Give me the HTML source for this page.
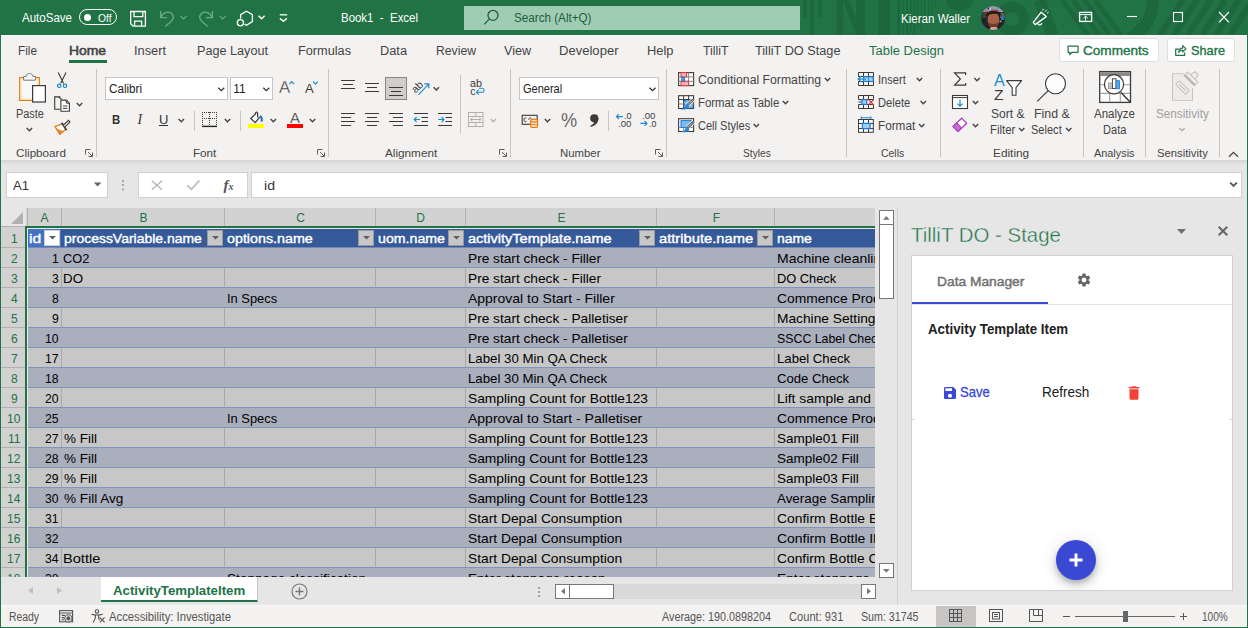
<!DOCTYPE html>
<html lang="en"><head><meta charset="utf-8"><title>Book1 - Excel</title>
<style>

html,body{margin:0;padding:0}
body{width:1248px;height:628px;position:relative;overflow:hidden;background:#e6e6e6;font-family:"Liberation Sans",sans-serif;color:#333}
div,span,svg{position:absolute;box-sizing:border-box}
svg{overflow:visible}
.t{white-space:pre;transform-origin:0 0;line-height:normal}

</style></head>
<body>
<div style="left:0px;top:0px;width:1248px;height:35px;background:#217346;"></div>
<svg style="left:0px;top:0px;overflow:hidden;" width="1248" height="35" viewBox="0 0 1248 35"><g fill="#1c673e" stroke="none"><rect x="803" y="0" width="4" height="18"/><rect x="810" y="0" width="4" height="35"/><rect x="817.7" y="0" width="4.3" height="17"/><rect x="836.7" y="0" width="6.3" height="35"/><path d="M843 0L856 35V0Z" opacity="0"/><path d="M843 0H849L862 35H856Z"/><rect x="856" y="0" width="9" height="35"/><rect x="878.4" y="0" width="11.6" height="35"/><rect x="897.5" y="0" width="2.5" height="35"/><rect x="902.5" y="0" width="1.5" height="33"/><rect x="906.3" y="0" width="1.7" height="35"/><rect x="910" y="0" width="1.6" height="31"/><rect x="913.6" y="0" width="1.6" height="35"/><rect x="917.2" y="0" width="1.4" height="28"/><rect x="920.8" y="0" width="1.4" height="30"/><rect x="924.4" y="0" width="1.2" height="24"/><rect x="928" y="0" width="1.2" height="20"/><rect x="931.6" y="0" width="1" height="14"/><rect x="935.2" y="0" width="1" height="8"/><path d="M946 0A13.5 11 0 0 0 973 0Z"/></g><g fill="none" stroke="#1c673e"><circle cx="1012" cy="19" r="12" stroke-width="10"/><path d="M1040 0L1052 35" stroke-width="12"/><path d="M1062 0L1088 35M1073 0L1099 35M1084 0L1110 35M1095 0L1121 35" stroke-width="5"/><path d="M1153 -4C1154 16 1146 28 1130 38" stroke-width="12"/><path d="M1183 0L1160 35M1197 0L1174 35M1211 0L1188 35M1225 0L1202 35M1239 0L1216 35M1253 0L1230 35" stroke-width="6"/></g></svg>
<div style="left:464px;top:6px;width:336px;height:24px;background:#9fcdb3;"></div>
<span class="t" style="left:22px;top:11px;font-size:12px;color:#fff;transform:scaleX(0.9607);">AutoSave</span>
<div style="left:79px;top:9px;width:38px;height:16px;border:1px solid #fff;border-radius:8px;"></div>
<div style="left:83.5px;top:13.5px;width:7px;height:7px;background:#fff;border-radius:50%;"></div>
<span class="t" style="left:97.5px;top:11.5px;font-size:11px;color:#fff;transform:scaleX(0.9320);">Off</span>
<span class="t" style="left:341px;top:11px;font-size:12px;color:#fff;transform:scaleX(0.9541);">Book1  -  Excel</span>
<span class="t" style="left:514px;top:11px;font-size:12px;color:#1e5c3c;transform:scaleX(0.9724);">Search (Alt+Q)</span>
<span class="t" style="left:901px;top:11.5px;font-size:12px;color:#fff;transform:scaleX(0.9640);">Kieran Waller</span>
<svg style="left:0px;top:0px;" width="1248" height="35" viewBox="0 0 1248 35"><g fill="none" stroke="#fff" stroke-width="1.3"><path d="M130.7 11.5H145.4V26.2H133.2L130.7 23.7Z"/><path d="M134 11.5V16.6H142.8V11.5"/><path d="M134.6 26.2V21.2H141.6V26.2"/></g><g fill="none" stroke="#6ca886" stroke-width="1.3"><path d="M160.6 11V17.6H167.2"/><path d="M161 17.2C163 12 169 10.6 172 14C174.6 17 173 19.5 171 21.5L165.2 26.6"/></g><g fill="none" stroke="#6ca886" stroke-width="1.3"><path d="M212.4 11V17.6H205.8"/><path d="M212 17.2C210 12 204 10.6 201 14C198.4 17 200 19.5 202 21.5L207.8 26.6"/></g><path d="M180.5 15.8L183.5 18.8L186.5 15.8" fill="none" stroke="#6ca886" stroke-width="1.2"/><path d="M219.7 15.8L222.7 18.8L225.7 15.8" fill="none" stroke="#6ca886" stroke-width="1.2"/><g fill="none" stroke="#fff" stroke-width="1.3"><path d="M240.6 18.5V14.6L246.5 11.2L252.4 14.6V21.6L246.5 25.2L244.6 24.2"/><circle cx="240.4" cy="22.7" r="3.1"/></g><path d="M258.6 15.8L261.6 18.8L264.6 15.8" fill="none" stroke="#fff" stroke-width="1.5"/><path d="M279.7 14.8H287.2" stroke="#fff" stroke-width="1.3"/><path d="M279.9 18.4L283.4 21.4L286.9 18.4" fill="none" stroke="#fff" stroke-width="1.4"/><g fill="none" stroke="#1e5c3c" stroke-width="1.3"><circle cx="493" cy="15.3" r="5"/><path d="M489.4 18.9L484.3 24.4"/></g><defs><clipPath id="av"><circle cx="993.1" cy="18" r="12"/></clipPath></defs><g clip-path="url(#av)"><rect x="981" y="6" width="25" height="25" fill="#23222b"/><rect x="981" y="6" width="25" height="6" fill="#8d98b2"/><rect x="981" y="12" width="6" height="6" fill="#3c4036"/><rect x="1000" y="13" width="6" height="5" fill="#55605a"/><ellipse cx="993.4" cy="20" rx="5.8" ry="8" fill="#a5634a"/><path d="M986 16.5C985 9 1001 8 1001.5 16C999 12.8 989.5 13.2 986 16.5Z" fill="#2b1b15"/><path d="M988.2 22C989 29.5 997.6 29.5 998.6 22C997 24.6 990 24.6 988.2 22Z" fill="#74382a"/><path d="M989 30L991 27H996.5L999 30.5Z" fill="#c9a590"/><circle cx="986.6" cy="11.6" r="1.1" fill="#d8442f"/><circle cx="992.4" cy="10.2" r="1.1" fill="#d8442f"/><circle cx="996.6" cy="10.4" r="1" fill="#c43c2c"/><circle cx="1001.4" cy="11.6" r="1" fill="#e07f86"/><circle cx="988.4" cy="8.4" r="0.8" fill="#111"/><circle cx="990" cy="8.8" r="0.7" fill="#eee"/><rect x="1001" y="17" width="3.4" height="3" fill="#2a6fd6"/><rect x="999.6" y="20.6" width="2" height="1.6" fill="#d8a32a"/></g><g fill="none" stroke="#fff" stroke-width="1.3" stroke-linejoin="round"><path d="M1033.2 22.3L1041.2 12.2L1046.2 16.6L1035.2 24.6Z"/><path d="M1038 23.6C1038.6 25.6 1041.6 25.4 1041.8 23"/><path d="M1045.2 11.6L1046.6 9.8M1047 13.2L1048.6 12.2M1042.8 10.4L1043.2 8.8" stroke-width="1"/></g><g fill="none" stroke="#fff" stroke-width="1.3"><rect x="1079.6" y="12.4" width="12" height="9"/><path d="M1079.6 14.6H1091.6" stroke-width="1"/><path d="M1085.6 20.5V16.2M1083.4 18.2L1085.6 16L1087.8 18.2" stroke-width="1"/></g><path d="M1127 16.5H1137" stroke="#fff" stroke-width="1.1"/><rect x="1173.5" y="12.5" width="9" height="9" fill="none" stroke="#fff" stroke-width="1.1"/><path d="M1219 12L1229 22.4M1229 12L1219 22.4" stroke="#fff" stroke-width="1.1"/></svg>
<div style="left:1px;top:35px;width:1246px;height:125px;background:#f3f2f1;"></div>
<div style="left:1px;top:35px;width:1246px;height:1px;background:#fbfafa;"></div>
<div style="left:1px;top:35px;width:1px;height:125px;background:#fbfafa;"></div>
<div style="left:1px;top:160px;width:1246px;height:6px;background:linear-gradient(#d3d3d3,#dedede 40%,#e6e6e6);"></div>
<span class="t" style="left:18px;top:44px;font-size:12.5px;color:#444;transform:scaleX(0.9426);">File</span>
<span class="t" style="left:69px;top:44px;font-size:12.5px;color:#444;transform:scaleX(1.1097);-webkit-text-stroke:0.55px #444;">Home</span>
<span class="t" style="left:134px;top:44px;font-size:12.5px;color:#444;transform:scaleX(1.0235);">Insert</span>
<span class="t" style="left:197px;top:44px;font-size:12.5px;color:#444;transform:scaleX(1.0114);">Page Layout</span>
<span class="t" style="left:298px;top:44px;font-size:12.5px;color:#444;transform:scaleX(1.0174);">Formulas</span>
<span class="t" style="left:380px;top:44px;font-size:12.5px;color:#444;transform:scaleX(1.0225);">Data</span>
<span class="t" style="left:436px;top:44px;font-size:12.5px;color:#444;transform:scaleX(0.9756);">Review</span>
<span class="t" style="left:504px;top:44px;font-size:12.5px;color:#444;transform:scaleX(1.0047);">View</span>
<span class="t" style="left:559px;top:44px;font-size:12.5px;color:#444;transform:scaleX(1.0441);">Developer</span>
<span class="t" style="left:647px;top:44px;font-size:12.5px;color:#444;transform:scaleX(1.0304);">Help</span>
<span class="t" style="left:702.5px;top:44px;font-size:12.5px;color:#444;transform:scaleX(0.9837);">TilliT</span>
<span class="t" style="left:755px;top:44px;font-size:12.5px;color:#444;transform:scaleX(1.0171);">TilliT DO Stage</span>
<span class="t" style="left:869px;top:44px;font-size:12.5px;color:#217346;transform:scaleX(1.0378);">Table Design</span>
<div style="left:69px;top:60px;width:38px;height:3px;background:#217346;"></div>
<div style="left:1059px;top:38px;width:100px;height:24px;background:#fff;border:1px solid #e1dfdd;border-radius:3px;"></div>
<div style="left:1167px;top:38px;width:68px;height:24px;background:#fff;border:1px solid #e1dfdd;border-radius:3px;"></div>
<span class="t" style="left:1083.3px;top:43px;font-size:13px;color:#217346;transform:scaleX(1.0436);-webkit-text-stroke:0.35px #217346;">Comments</span>
<span class="t" style="left:1191.2px;top:43px;font-size:13px;color:#217346;transform:scaleX(0.9797);-webkit-text-stroke:0.35px #217346;">Share</span>
<svg style="left:0px;top:36px;" width="1248" height="30" viewBox="0 36 1248 30"><g fill="none" stroke="#217346" stroke-width="1.2" stroke-linejoin="round"><path d="M1068.1 46.1H1078.1V52.3H1072.2L1069.8 54.5V52.3H1068.1Z"/><path d="M1179.2 49.2H1175.7V55.3H1184.7V52.4"/><path d="M1178.8 52.6C1179 49.6 1180.6 48.2 1182.6 48.2V45.6L1186 48.9L1182.6 51.8V50C1181 50 1179.8 50.6 1178.8 52.6Z"/></g></svg>
<div style="left:96px;top:69px;width:1px;height:88px;background:#c8c6c4;"></div>
<div style="left:328px;top:69px;width:1px;height:88px;background:#c8c6c4;"></div>
<div style="left:510px;top:69px;width:1px;height:88px;background:#c8c6c4;"></div>
<div style="left:666px;top:69px;width:1px;height:88px;background:#c8c6c4;"></div>
<div style="left:846px;top:69px;width:1px;height:88px;background:#c8c6c4;"></div>
<div style="left:940px;top:69px;width:1px;height:88px;background:#c8c6c4;"></div>
<div style="left:1083px;top:69px;width:1px;height:88px;background:#c8c6c4;"></div>
<div style="left:1145px;top:69px;width:1px;height:88px;background:#c8c6c4;"></div>
<div style="left:1219px;top:69px;width:1px;height:88px;background:#c8c6c4;"></div>
<div style="left:194px;top:111px;width:1px;height:20px;background:#c8c6c4;"></div>
<div style="left:240px;top:111px;width:1px;height:20px;background:#c8c6c4;"></div>
<div style="left:608px;top:111px;width:1px;height:20px;background:#c8c6c4;"></div>
<div style="left:460px;top:75px;width:1px;height:59px;background:#c8c6c4;"></div>
<div style="left:105px;top:77px;width:123px;height:23px;background:#fff;border:1px solid #c8c6c4;"></div>
<div style="left:230px;top:77px;width:43px;height:23px;background:#fff;border:1px solid #c8c6c4;"></div>
<div style="left:519px;top:77px;width:140px;height:23px;background:#fff;border:1px solid #c8c6c4;"></div>
<div style="left:385px;top:77px;width:22px;height:23px;background:#d0cecc;border:1px solid #8a8886;"></div>
<span class="t" style="left:16.3px;top:106.9px;font-size:12px;color:#444;transform:scaleX(0.9092);">Paste</span>
<span class="t" style="left:108.7px;top:82px;font-size:12px;color:#222;transform:scaleX(0.9701);">Calibri</span>
<span class="t" style="left:233.2px;top:82px;font-size:12px;color:#222;">11</span>
<span class="t" style="left:522.5px;top:82px;font-size:12px;color:#222;transform:scaleX(0.9180);">General</span>
<span class="t" style="left:15.5px;top:145.9px;font-size:11.6px;color:#444;transform:scaleX(1.0076);">Clipboard</span>
<span class="t" style="left:192.5px;top:145.9px;font-size:11.6px;color:#444;transform:scaleX(1.0042);">Font</span>
<span class="t" style="left:385.3px;top:145.9px;font-size:11.6px;color:#444;transform:scaleX(1.0124);">Alignment</span>
<span class="t" style="left:560.3px;top:145.9px;font-size:11.6px;color:#444;transform:scaleX(0.9818);">Number</span>
<span class="t" style="left:742.5px;top:145.9px;font-size:11.6px;color:#444;transform:scaleX(0.8804);">Styles</span>
<span class="t" style="left:881.3px;top:145.9px;font-size:11.6px;color:#444;transform:scaleX(0.8999);">Cells</span>
<span class="t" style="left:993.3px;top:145.9px;font-size:11.6px;color:#444;transform:scaleX(1.0211);">Editing</span>
<span class="t" style="left:1094px;top:145.9px;font-size:11.6px;color:#444;transform:scaleX(0.9381);">Analysis</span>
<span class="t" style="left:1157px;top:145.9px;font-size:11.6px;color:#444;transform:scaleX(0.9731);">Sensitivity</span>
<span class="t" style="left:697.5px;top:73px;font-size:12px;color:#444;transform:scaleX(1.0188);">Conditional Formatting</span>
<span class="t" style="left:697.5px;top:95.6px;font-size:12px;color:#444;transform:scaleX(0.9461);">Format as Table</span>
<span class="t" style="left:697.5px;top:118.8px;font-size:12px;color:#444;transform:scaleX(0.9208);">Cell Styles</span>
<span class="t" style="left:877.5px;top:73px;font-size:12px;color:#444;transform:scaleX(0.9262);">Insert</span>
<span class="t" style="left:877.5px;top:95.6px;font-size:12px;color:#444;transform:scaleX(0.9283);">Delete</span>
<span class="t" style="left:877.5px;top:118.8px;font-size:12px;color:#444;transform:scaleX(0.9785);">Format</span>
<span class="t" style="left:991px;top:106.7px;font-size:12px;color:#444;transform:scaleX(1.0102);">Sort &amp;</span>
<span class="t" style="left:989.7px;top:122.7px;font-size:12px;color:#444;transform:scaleX(0.9486);">Filter</span>
<span class="t" style="left:1034px;top:106.7px;font-size:12px;color:#444;transform:scaleX(1.0292);">Find &amp;</span>
<span class="t" style="left:1031px;top:122.7px;font-size:12px;color:#444;transform:scaleX(0.9203);">Select</span>
<span class="t" style="left:1094px;top:106.7px;font-size:12px;color:#444;transform:scaleX(0.9601);">Analyze</span>
<span class="t" style="left:1103.3px;top:122.7px;font-size:12px;color:#444;transform:scaleX(0.9227);">Data</span>
<span class="t" style="left:1156px;top:106.7px;font-size:12px;color:#a19f9d;transform:scaleX(0.9772);">Sensitivity</span>
<span class="t" style="left:112.2px;top:111.5px;font-size:13px;font-weight:700;transform:scaleX(0.8732);">B</span>
<span class="t" style="left:137.5px;top:111.5px;font-size:14px;font-family:'Liberation Serif',serif;font-style:italic;">I</span>
<span class="t" style="left:159px;top:111.5px;font-size:13px;">U</span>
<div style="left:159px;top:125px;width:9px;height:1px;background:#333;"></div>
<span class="t" style="left:561px;top:109.2px;font-size:19.4px;color:#3b3a39;transform:scaleX(0.9391);-webkit-text-stroke:0.25px #f3f2f1;">%</span>
<svg style="left:0px;top:0px;" width="1248" height="165" viewBox="0 0 1248 165"><rect x="19.7" y="77.6" width="19.6" height="22.8" fill="#f9f9f9" stroke="#e07a0f" stroke-width="1.2"/><rect x="20.9" y="78.8" width="17.2" height="20.4" fill="none" stroke="#fbdba6" stroke-width="1.1"/><path d="M23.6 80.2V76.4H26.2C26.4 72.6 32.6 72.6 32.8 76.4H35.4V80.2Z" fill="#f8f8f8" stroke="#797775" stroke-width="1"/><rect x="32.6" y="85.6" width="12.8" height="16.4" fill="#fff" stroke="#3b3a39" stroke-width="1.2"/><path d="M26.7 127.9L29.4 130.70000000000002L32.1 127.9" fill="none" stroke="#444" stroke-width="1.4"/><path d="M58.2 72.6L63.6 83.6M66 72.6L60.6 83.6" stroke="#3b3a39" stroke-width="1.1" fill="none"/><circle cx="59.2" cy="85.8" r="1.7" fill="none" stroke="#1e8bcd" stroke-width="1.2"/><circle cx="65" cy="85.8" r="1.7" fill="none" stroke="#1e8bcd" stroke-width="1.2"/><path d="M60.4 96.9H54.7V109.3H60" fill="none" stroke="#3b3a39" stroke-width="1.1"/><path d="M58.4 96.9L61.6 99.2" fill="none" stroke="#3b3a39" stroke-width="1.1"/><path d="M60.9 100.1H66.3L69.4 103.2V111.3H60.9Z" fill="#fff" stroke="#3b3a39" stroke-width="1.1"/><path d="M66.3 100.1V103.2H69.4" fill="none" stroke="#3b3a39" stroke-width="1"/><path d="M63 106H67.4M63 108.4H67.4" stroke="#3b3a39" stroke-width="1"/><path d="M76.8 102.89999999999999L79.5 105.7L82.2 102.89999999999999" fill="none" stroke="#444" stroke-width="1.4"/><path d="M55 126.6L62.6 123.6L65.8 129.2L59.8 134.4Z" fill="#fff" stroke="#e07a0f" stroke-width="1.2" stroke-linejoin="round"/><path d="M57 128.6L63.6 131.2L59.8 134.4Z" fill="#e07a0f" opacity=".85"/><path d="M61.6 122.8L66.6 130.2" stroke="#3b3a39" stroke-width="1.6"/><path d="M63.6 125L68.6 120.4L70 122L65 126.8" fill="#fff" stroke="#3b3a39" stroke-width="1.1"/><g fill="none" stroke="#605e5c" stroke-width="1"><path d="M85.5 154.5V149.5H90.5"/><path d="M88 152L92.2 156.2M92.5 152.5V156.5H88.5"/></g><path d="M218.3 87.7L221.3 90.7L224.3 87.7" fill="none" stroke="#333" stroke-width="1.3"/><path d="M263.3 87.7L266.3 90.7L269.3 87.7" fill="none" stroke="#333" stroke-width="1.3"/><path d="M289.4 84.2L291.7 81.6L294 84.2" fill="none" stroke="#1e8bcd" stroke-width="1.2"/><path d="M313.2 81.6L315.5 84.2L317.8 81.6" fill="none" stroke="#1e8bcd" stroke-width="1.2"/><path d="M178.60000000000002 118.89999999999999L181.3 121.7L184.0 118.89999999999999" fill="none" stroke="#444" stroke-width="1.4"/><path d="M202 112.5H217M202 118.5H217M202.5 112V125M209.5 112V125M216.5 112V125" stroke="#3b3a39" stroke-width="1" stroke-dasharray="1 1" fill="none"/><path d="M202 126.4H217" stroke="#222" stroke-width="1.4"/><path d="M224.8 118.89999999999999L227.5 121.7L230.2 118.89999999999999" fill="none" stroke="#444" stroke-width="1.4"/><path d="M255.5 113.9L250.8 118.5L255.2 122.6L259.7 117.2" fill="#fafafa" stroke="#3b3a39" stroke-width="1.2" stroke-linejoin="round"/><path d="M255.5 114.6V113.4C255.6 111.6 257.5 111.6 257.6 113.4V117.4" fill="none" stroke="#3b3a39" stroke-width="1.2"/><path d="M259.8 116.2C261.6 116.6 262.2 119 261.6 121.6" fill="none" stroke="#1668c2" stroke-width="2"/><rect x="248" y="124" width="16" height="4" fill="#ffff00"/><path d="M270.6 118.89999999999999L273.3 121.7L276.0 118.89999999999999" fill="none" stroke="#444" stroke-width="1.4"/><rect x="287" y="124" width="16" height="4" fill="#ff0000"/><path d="M309.8 118.89999999999999L312.5 121.7L315.2 118.89999999999999" fill="none" stroke="#444" stroke-width="1.4"/><g fill="none" stroke="#605e5c" stroke-width="1"><path d="M317.5 154.5V149.5H322.5"/><path d="M320 152L324.2 156.2M324.5 152.5V156.5H320.5"/></g><path d="M341 80.5H355M343 84.5H353M341 88.5H355" stroke="#3b3a39" stroke-width="1.1" fill="none"/><path d="M365 83.5H379M367 87.5H377M365 91.5H379" stroke="#3b3a39" stroke-width="1.1" fill="none"/><path d="M389 87.5H403M391 91.5H401M389 95.5H403" stroke="#3b3a39" stroke-width="1.1" fill="none"/><path d="M341 113.5H355M341 117.5H351M341 121.5H355M341 125.5H351" stroke="#3b3a39" stroke-width="1.1" fill="none"/><path d="M365 113.5H379M367 117.5H377M365 121.5H379M367 125.5H377" stroke="#3b3a39" stroke-width="1.1" fill="none"/><path d="M389 113.5H403M393 117.5H403M389 121.5H403M393 125.5H403" stroke="#3b3a39" stroke-width="1.1" fill="none"/><path d="M414 113.5H428M414 125.5H428" stroke="#3b3a39" stroke-width="1.1" fill="none"/><path d="M421.5 117.5H428M421.5 121.5H428" stroke="#3b3a39" stroke-width="1.1" fill="none"/><path d="M414.2 119.5H420M416.6 117L414.2 119.5L416.6 122" fill="none" stroke="#1e8bcd" stroke-width="1.1"/><path d="M438 113.5H452M438 125.5H452" stroke="#3b3a39" stroke-width="1.1" fill="none"/><path d="M445.5 117.5H452M445.5 121.5H452" stroke="#3b3a39" stroke-width="1.1" fill="none"/><path d="M438.2 119.5H444M441.6 117L444 119.5L441.6 122" fill="none" stroke="#1e8bcd" stroke-width="1.1"/><path d="M418.6 94.6L428.6 84.2M424.4 83.8H428.8V88.2" fill="none" stroke="#1e8bcd" stroke-width="1.2"/><path d="M433.6 87.3L436.3 90.10000000000001L439.0 87.3" fill="none" stroke="#444" stroke-width="1.4"/><path d="M479 88.2H482.4C484.6 88.2 484.6 92.2 482.4 92.2H476.6M478.8 89.8L476.4 92.2L478.8 94.6" fill="none" stroke="#1e8bcd" stroke-width="1.1"/><g fill="none" stroke="#b3b0ad" stroke-width="1"><rect x="468.5" y="112.5" width="14.5" height="14"/><path d="M468.5 116.5H483M468.5 122.5H483M475.7 112.5V116.5M475.7 122.5V126.5"/><path d="M470.6 119.5H481M472.4 117.8L470.6 119.5L472.4 121.2M479.2 117.8L481 119.5L479.2 121.2"/></g><path d="M490.6 118.89999999999999L493.3 121.7L496.0 118.89999999999999" fill="none" stroke="#b3b0ad" stroke-width="1.4"/><g fill="none" stroke="#605e5c" stroke-width="1"><path d="M499.5 154.5V149.5H504.5"/><path d="M502 152L506.2 156.2M506.5 152.5V156.5H502.5"/></g><path d="M649.5 87.7L652.5 90.7L655.5 87.7" fill="none" stroke="#333" stroke-width="1.3"/><rect x="522.2" y="115.3" width="15" height="9" fill="none" stroke="#3b3a39" stroke-width="1.1"/><path d="M526.5 118.2C525.2 117.2 523.9 118.2 523.9 119.8C523.9 121.4 525.2 122.4 526.5 121.4M531.4 118.2C530.1 117.2 528.8 118.2 528.8 119.8" fill="none" stroke="#3b3a39" stroke-width="1"/><path d="M530.6 120.6V126.2C530.6 128 537.6 128 537.6 126.2V120.6" fill="#fbe3c3" stroke="#e07a0f" stroke-width="1.1"/><ellipse cx="534.1" cy="120.6" rx="3.5" ry="1.5" fill="#fbe3c3" stroke="#e07a0f" stroke-width="1.1"/><path d="M530.6 123.4C530.6 125.2 537.6 125.2 537.6 123.4" fill="none" stroke="#e07a0f" stroke-width="1"/><path d="M544.8 118.89999999999999L547.5 121.7L550.2 118.89999999999999" fill="none" stroke="#444" stroke-width="1.4"/><circle cx="594.3" cy="118.3" r="4.1" fill="#3b3a39"/><path d="M598.4 118.2C598.6 123 595 126 590.6 126.8L590.2 125.8C593.2 124.8 594.8 122.6 594.6 120.6Z" fill="#3b3a39"/><path d="M616.4 116.6H623M618.8 114.2L616.4 116.6L618.8 119" fill="none" stroke="#1e8bcd" stroke-width="1.1"/><path d="M640.4 123.4H647M644.6 121L647 123.4L644.6 125.8" fill="none" stroke="#1e8bcd" stroke-width="1.1"/><g fill="none" stroke="#605e5c" stroke-width="1"><path d="M655.5 154.5V149.5H660.5"/><path d="M658 152L662.2 156.2M662.5 152.5V156.5H658.5"/></g><rect x="678.6" y="72.6" width="15" height="13" fill="#fff" stroke="#3b3a39" stroke-width="1.1"/><path d="M678.6 76.9H693.6M678.6 81.3H693.6M683.6 72.6V85.6M688.6 72.6V85.6" stroke="#8a8886" stroke-width="1" fill="none"/><rect x="681" y="72.6" width="5.6" height="4.3" fill="#f9b4b7" stroke="#e03a3e" stroke-width="1"/><rect x="681" y="81.3" width="7.6" height="4.3" fill="#f9b4b7" stroke="#e03a3e" stroke-width="1"/><rect x="681.8" y="77.4" width="2.6" height="3.4" fill="#5aa9e6" stroke="#1c7cd5" stroke-width="1"/><path d="M824.8 77.89999999999999L827.5 80.7L830.2 77.89999999999999" fill="none" stroke="#444" stroke-width="1.4"/><rect x="678.6" y="95.7" width="15" height="12.8" fill="#fff" stroke="#3b3a39" stroke-width="1.1"/><path d="M678.6 99.5H693.6M683.6 95.7V108.5M688.6 95.7V99.5" stroke="#3b3a39" stroke-width="1" fill="none"/><path d="M678.6 104H683.6" stroke="#8a8886" stroke-width="1"/><rect x="684.1" y="100" width="9" height="8" fill="#7dbcee"/><path d="M684.1 100.5H693M693 100V108M684.6 100V108M684.1 108H693" stroke="#1c7cd5" stroke-width="1" stroke-dasharray="2 1.4" fill="none"/><path d="M693.4 99.4L687.2 105.4" stroke="#f3f2f1" stroke-width="4.2"/><path d="M693.4 99.4L687.2 105.4" stroke="#605e5c" stroke-width="2.6"/><path d="M692.8 100L688 104.6" stroke="#d2d0ce" stroke-width=".8"/><path d="M688.2 104.4C686.6 104 685.4 105 685 106.6C684.6 108 683 108.8 681.2 109.2C684 110.2 687.6 109.4 688.8 106.8C689.2 105.8 689 104.8 688.2 104.4Z" fill="#2b88d8"/><rect x="678.6" y="118.7" width="15" height="12.8" fill="#fff" stroke="#3b3a39" stroke-width="1.1"/><path d="M678.6 127.4H693.6M683.6 127.4V131.5M688.6 127.4V131.5" stroke="#8a8886" stroke-width="1" fill="none"/><rect x="681" y="120.6" width="10.2" height="6.8" fill="#7dbcee" stroke="#1c7cd5" stroke-width="1"/><path d="M693.4 122.0L687.2 128.0" stroke="#f3f2f1" stroke-width="4.2"/><path d="M693.4 122.0L687.2 128.0" stroke="#605e5c" stroke-width="2.6"/><path d="M692.8 122.6L688 127.19999999999999" stroke="#d2d0ce" stroke-width=".8"/><path d="M688.2 127.0C686.6 126.6 685.4 127.6 685 129.2C684.6 130.6 683 131.4 681.2 131.8C684 132.8 687.6 132.0 688.8 129.4C689.2 128.4 689 127.4 688.2 127.0Z" fill="#2b88d8"/><path d="M782.8 100.89999999999999L785.5 103.7L788.2 100.89999999999999" fill="none" stroke="#444" stroke-width="1.4"/><path d="M753.5999999999999 123.89999999999999L756.3 126.7L759.0 123.89999999999999" fill="none" stroke="#444" stroke-width="1.4"/><path d="M858.5 76.5V72.5H873.5V85.5H858.5V81.5M858.5 76.5H873.5M858.5 81.5H873.5M863.5 72.5V76.5M868.5 72.5V76.5M863.5 81.5V85.5M868.5 81.5V85.5" fill="none" stroke="#3b3a39" stroke-width="1"/><rect x="863.6" y="76.8" width="9.6" height="4.6" fill="#9ccdf3" stroke="#1c7cd5" stroke-width="1"/><path d="M868.5 76.8V81.4" stroke="#1c7cd5" stroke-width=".8"/><path d="M858.4 79.1H866M861.2 76.2L858.3 79.1L861.2 82" fill="none" stroke="#1e8bcd" stroke-width="1.4"/><path d="M916.8 77.89999999999999L919.5 80.7L922.2 77.89999999999999" fill="none" stroke="#444" stroke-width="1.4"/><path d="M858.5 99.5V95.5H873.5V99.5M858.5 99.5H873.5M863.5 95.5V99.5M868.5 95.5V99.5M858.5 104.5V108.5H873.5V104.5M858.5 104.5H873.5M863.5 104.5V108.5M868.5 104.5V108.5M858.5 102H861.6" fill="none" stroke="#3b3a39" stroke-width="1"/><rect x="861.9" y="99.6" width="4.8" height="4.8" fill="#9ccdf3" stroke="#1c7cd5" stroke-width="1.2"/><path d="M868.6 99.8L873.5 104.6M873.5 99.8L868.6 104.6" stroke="#e8373d" stroke-width="1.2"/><path d="M920.5999999999999 100.89999999999999L923.3 103.7L926.0 100.89999999999999" fill="none" stroke="#444" stroke-width="1.4"/><rect x="858.5" y="119.5" width="14.8" height="12.8" fill="#fff" stroke="#3b3a39" stroke-width="1"/><path d="M858.5 123.5H873.5M858.5 128.5H873.5M863.5 119.5V132.5M868.5 119.5V132.5" stroke="#3b3a39" stroke-width="1" fill="none"/><rect x="862.3" y="123.3" width="7.8" height="5.4" fill="#9ccdf3" stroke="#1c7cd5" stroke-width="1.2"/><path d="M861.3 117.8H870.9M861.3 116.4V119.2M870.9 116.4V119.2" stroke="#1e8bcd" stroke-width="1.1" fill="none"/><path d="M919.0 123.89999999999999L921.7 126.7L924.4000000000001 123.89999999999999" fill="none" stroke="#444" stroke-width="1.4"/><path d="M965.6 75V72.9H954.6L960.4 79L954.6 85.1H965.6V83" fill="none" stroke="#3b3a39" stroke-width="1.2"/><path d="M974.3 77.89999999999999L977 80.7L979.7 77.89999999999999" fill="none" stroke="#444" stroke-width="1.4"/><rect x="952.5" y="95.5" width="15" height="13" fill="#fff" stroke="#3b3a39" stroke-width="1.1"/><path d="M952.5 97.6H967.5" stroke="#3b3a39" stroke-width="1"/><path d="M960 99.6V106M957.4 103.6L960 106.2L962.6 103.6" fill="none" stroke="#1e8bcd" stroke-width="1.2"/><path d="M972.8 100.89999999999999L975.5 103.7L978.2 100.89999999999999" fill="none" stroke="#444" stroke-width="1.4"/><path d="M953 126.4L961.6 118.2L966.6 123.2L958 131.6Z" fill="#fff" stroke="#a435b8" stroke-width="1.2" stroke-linejoin="round"/><path d="M953 126.4L956.8 122.8L961.6 127.8L958 131.6Z" fill="#c76ad6" stroke="#a435b8" stroke-width="1"/><path d="M972.8 123.89999999999999L975.5 126.7L978.2 123.89999999999999" fill="none" stroke="#444" stroke-width="1.4"/><path d="M1006.6 80.6H1021.6L1016 87.6V95.2H1012.2V87.6Z" fill="#fff" stroke="#3b3a39" stroke-width="1.1" stroke-linejoin="round"/><path d="M1019.0 127.9L1021.7 130.70000000000002L1024.4 127.9" fill="none" stroke="#444" stroke-width="1.4"/><circle cx="1055.5" cy="83.7" r="10" fill="#fdfdfd" stroke="#3b3a39" stroke-width="1.1"/><path d="M1048.2 90.6L1037.2 101.4" stroke="#3b3a39" stroke-width="1.2"/><path d="M1066.0 127.9L1068.7 130.70000000000002L1071.4 127.9" fill="none" stroke="#444" stroke-width="1.4"/><rect x="1099.7" y="71.6" width="30.8" height="30.8" fill="#fff" stroke="#3b3a39" stroke-width="1.3"/><rect x="1100.3" y="72.2" width="29.6" height="3.8" fill="#8a8886"/><path d="M1100 84.7H1130M1100 93.4H1130M1109.7 76V102M1120.3 76V102" stroke="#a19f9d" stroke-width="1.1" fill="none"/><path d="M1121 92.6L1130.6 102.4" stroke="#3b3a39" stroke-width="1.5"/><circle cx="1114" cy="84.3" r="9.6" fill="#fff" stroke="#3b3a39" stroke-width="1.2"/><rect x="1108.6" y="83" width="3.8" height="5.6" fill="#c8c6c4" stroke="#979593" stroke-width=".8"/><rect x="1112.4" y="78.8" width="3.6" height="9.8" fill="#fff" stroke="#3b3a39" stroke-width=".9"/><rect x="1116" y="80.6" width="3.6" height="8.2" fill="#5aa9e6" stroke="#1c7cd5" stroke-width=".8"/><path d="M1183.5 73.8H1172.6V100.2H1192.4V88" fill="none" stroke="#c3c1bf" stroke-width="1.1"/><path d="M1173.2 74.4H1184L1192 86V99.6H1173.2Z" fill="#edecea"/><g transform="translate(1191 78.9) rotate(45)" stroke="#c3c1bf" stroke-width="1"><path d="M-2.2 -8H2.2L3.4 -2.5H-3.4Z" fill="#eeedeb"/><rect x="-7.4" y="-2.5" width="14.8" height="5" fill="#eeedeb"/><rect x="-7" y="0.6" width="14" height="2.2" fill="#b9b7b5" stroke="none"/><rect x="-7" y="9.5" width="14" height="5.4" rx="1" fill="#edecea"/><path d="M-4.4 12.2H4.4" stroke-width="1.2"/></g><path d="M1179.3 127.9L1182 130.70000000000002L1184.7 127.9" fill="none" stroke="#b3b0ad" stroke-width="1.4"/><path d="M1229.0 156.79999999999998L1233.5 152.4L1238.0 156.79999999999998" fill="none" stroke="#444" stroke-width="1.3"/></svg>
<span class="t" style="left:279.2px;top:78px;font-size:17px;color:#3b3a39;transform:scaleX(0.9873);-webkit-text-stroke:0.3px #f3f2f1;">A</span>
<span class="t" style="left:304.5px;top:81px;font-size:13.2px;color:#3b3a39;transform:scaleX(0.9890);">A</span>
<span class="t" style="left:290.3px;top:110px;font-size:14.2px;color:#3b3a39;transform:scaleX(1.0561);-webkit-text-stroke:0.2px #f3f2f1;">A</span>
<span class="t" style="left:417.2px;top:83.13px;font-size:10.5px;color:#3b3a39;transform:rotate(-45deg);transform-origin:0 100%;">ab</span>
<span class="t" style="left:470.2px;top:77.4px;font-size:10.5px;color:#3b3a39;transform:scaleX(1.0267);">ab</span>
<span class="t" style="left:470.2px;top:84.8px;font-size:10.5px;color:#3b3a39;">c</span>
<span class="t" style="left:624px;top:111.4px;font-size:9px;color:#3b3a39;transform:scaleX(1.0112);">.0</span>
<span class="t" style="left:617.8px;top:119px;font-size:9px;color:#3b3a39;transform:scaleX(1.0707);">.00</span>
<span class="t" style="left:641.8px;top:111.4px;font-size:9px;color:#3b3a39;transform:scaleX(1.0707);">.00</span>
<span class="t" style="left:648.6px;top:119px;font-size:9px;color:#3b3a39;transform:scaleX(0.9846);">.0</span>
<span class="t" style="left:993.6px;top:71.7px;font-size:16px;color:#1e8bcd;transform:scaleX(1.0120);">A</span>
<span class="t" style="left:993.8px;top:85.5px;font-size:15px;color:#3b3a39;transform:scaleX(1.0467);">Z</span>
<div style="left:6px;top:172px;width:102px;height:26px;background:#fff;border:1px solid #d0d0d0;"></div>
<div style="left:138px;top:172px;width:110px;height:26px;background:#fff;border:1px solid #d0d0d0;"></div>
<div style="left:251px;top:172px;width:991px;height:26px;background:#fff;border:1px solid #d0d0d0;"></div>
<svg style="left:1229px;top:181px;" width="9" height="7" viewBox="0 0 9 7"><path d="M1.2 1.6L4.5 4.9L7.8 1.6" fill="none" stroke="#555" stroke-width="1.8"/></svg>
<span class="t" style="left:13px;top:177.5px;font-size:13px;transform:scaleX(1.0059);">A1</span>
<span class="t" style="left:263.5px;top:177.5px;font-size:13px;transform:scaleX(1.0864);">id</span>
<span class="t" style="left:223.4px;top:176.6px;font-size:15px;font-family:'Liberation Serif',serif;font-weight:700;font-style:italic;color:#555;">f</span>
<span class="t" style="left:228.6px;top:181.2px;font-size:10px;font-family:'Liberation Serif',serif;font-weight:700;font-style:italic;color:#555;">x</span>
<svg style="left:110px;top:168px;" width="150" height="34" viewBox="110 168 150 34"><path d="M151.8 180.8L162 189.8M162 180.8L151.8 189.8" stroke="#b4b4b4" stroke-width="1.3" fill="none"/><path d="M187.4 185.4L191.4 189.4L199.4 180.4" stroke="#c2c2c2" stroke-width="2" fill="none"/><path d="M122 180h2v2h-2zM122 184h2v2h-2zM122 188.4h2v2h-2z" fill="#a6a6a6"/><path d="M93.8 182.6H101.4L97.6 186.4Z" fill="#666"/></svg>
<div style="left:1px;top:208px;width:874px;height:369px;overflow:hidden;background:#d2d2d2">
<div style="left:26px;top:0px;width:1px;height:18px;background:#b1b1b1;"></div>
<div style="left:60px;top:0px;width:1px;height:18px;background:#b1b1b1;"></div>
<div style="left:223px;top:0px;width:1px;height:18px;background:#b1b1b1;"></div>
<div style="left:374px;top:0px;width:1px;height:18px;background:#b1b1b1;"></div>
<div style="left:464px;top:0px;width:1px;height:18px;background:#b1b1b1;"></div>
<div style="left:655px;top:0px;width:1px;height:18px;background:#b1b1b1;"></div>
<div style="left:773px;top:0px;width:1px;height:18px;background:#b1b1b1;"></div>
<span class="t" style="left:39.49px;top:3px;font-size:12px;color:#217346;">A</span>
<span class="t" style="left:138.49px;top:3px;font-size:12px;color:#217346;">B</span>
<span class="t" style="left:295.16px;top:3px;font-size:12px;color:#217346;">C</span>
<span class="t" style="left:415.16px;top:3px;font-size:12px;color:#217346;">D</span>
<span class="t" style="left:556.49px;top:3px;font-size:12px;color:#217346;">E</span>
<span class="t" style="left:711.83px;top:3px;font-size:12px;color:#217346;">F</span>
<div style="left:0px;top:0px;width:25px;height:19px;background:#e6e6e6;"></div>
<svg style="left:10px;top:4px;" width="12" height="12" viewBox="0 0 12 12"><path d="M12 0V12H0Z" fill="#b1b1b1"/></svg>
<div style="left:0px;top:39px;width:26px;height:1px;background:#b1b1b1;"></div>
<span class="t" style="left:9.66px;top:24px;font-size:12.5px;color:#217346;transform:scaleX(0.9600);">1</span>
<div style="left:0px;top:59px;width:26px;height:1px;background:#b1b1b1;"></div>
<span class="t" style="left:9.66px;top:44px;font-size:12.5px;color:#217346;transform:scaleX(0.9600);">2</span>
<div style="left:0px;top:79px;width:26px;height:1px;background:#b1b1b1;"></div>
<span class="t" style="left:9.66px;top:64px;font-size:12.5px;color:#217346;transform:scaleX(0.9600);">3</span>
<div style="left:0px;top:99px;width:26px;height:1px;background:#b1b1b1;"></div>
<span class="t" style="left:9.66px;top:84px;font-size:12.5px;color:#217346;transform:scaleX(0.9600);">4</span>
<div style="left:0px;top:119px;width:26px;height:1px;background:#b1b1b1;"></div>
<span class="t" style="left:9.66px;top:104px;font-size:12.5px;color:#217346;transform:scaleX(0.9600);">5</span>
<div style="left:0px;top:139px;width:26px;height:1px;background:#b1b1b1;"></div>
<span class="t" style="left:9.66px;top:124px;font-size:12.5px;color:#217346;transform:scaleX(0.9600);">6</span>
<div style="left:0px;top:159px;width:26px;height:1px;background:#b1b1b1;"></div>
<span class="t" style="left:9.66px;top:144px;font-size:12.5px;color:#217346;transform:scaleX(0.9600);">7</span>
<div style="left:0px;top:179px;width:26px;height:1px;background:#b1b1b1;"></div>
<span class="t" style="left:9.66px;top:164px;font-size:12.5px;color:#217346;transform:scaleX(0.9600);">8</span>
<div style="left:0px;top:199px;width:26px;height:1px;background:#b1b1b1;"></div>
<span class="t" style="left:9.66px;top:184px;font-size:12.5px;color:#217346;transform:scaleX(0.9600);">9</span>
<div style="left:0px;top:219px;width:26px;height:1px;background:#b1b1b1;"></div>
<span class="t" style="left:6.33px;top:204px;font-size:12.5px;color:#217346;transform:scaleX(0.9600);">10</span>
<div style="left:0px;top:239px;width:26px;height:1px;background:#b1b1b1;"></div>
<span class="t" style="left:6.77px;top:224px;font-size:12.5px;color:#217346;transform:scaleX(0.9600);">11</span>
<div style="left:0px;top:259px;width:26px;height:1px;background:#b1b1b1;"></div>
<span class="t" style="left:6.33px;top:244px;font-size:12.5px;color:#217346;transform:scaleX(0.9600);">12</span>
<div style="left:0px;top:279px;width:26px;height:1px;background:#b1b1b1;"></div>
<span class="t" style="left:6.33px;top:264px;font-size:12.5px;color:#217346;transform:scaleX(0.9600);">13</span>
<div style="left:0px;top:299px;width:26px;height:1px;background:#b1b1b1;"></div>
<span class="t" style="left:6.33px;top:284px;font-size:12.5px;color:#217346;transform:scaleX(0.9600);">14</span>
<div style="left:0px;top:319px;width:26px;height:1px;background:#b1b1b1;"></div>
<span class="t" style="left:6.33px;top:304px;font-size:12.5px;color:#217346;transform:scaleX(0.9600);">15</span>
<div style="left:0px;top:339px;width:26px;height:1px;background:#b1b1b1;"></div>
<span class="t" style="left:6.33px;top:324px;font-size:12.5px;color:#217346;transform:scaleX(0.9600);">16</span>
<div style="left:0px;top:359px;width:26px;height:1px;background:#b1b1b1;"></div>
<span class="t" style="left:6.33px;top:344px;font-size:12.5px;color:#217346;transform:scaleX(0.9600);">17</span>
<div style="left:0px;top:379px;width:26px;height:1px;background:#b1b1b1;"></div>
<span class="t" style="left:6.33px;top:364px;font-size:12.5px;color:#217346;transform:scaleX(0.9600);">18</span>
<div style="left:0px;top:18px;width:26px;height:1px;background:#b1b1b1;"></div>
<div style="left:27px;top:20px;width:860px;height:19px;background:#355999;"></div>
<div style="left:27px;top:39px;width:860px;height:1px;background:#7388b3;"></div>
<div style="left:27px;top:40px;width:860px;height:20px;background:#a9afbd;border-bottom:1px solid #7f93bb;"></div>
<div style="left:27px;top:60px;width:860px;height:20px;background:#c7c7c7;border-bottom:1px solid #7f93bb;"></div>
<div style="left:60px;top:60px;width:1px;height:19px;background:#a8a8a8;"></div>
<div style="left:223px;top:60px;width:1px;height:19px;background:#a8a8a8;"></div>
<div style="left:374px;top:60px;width:1px;height:19px;background:#a8a8a8;"></div>
<div style="left:464px;top:60px;width:1px;height:19px;background:#a8a8a8;"></div>
<div style="left:655px;top:60px;width:1px;height:19px;background:#a8a8a8;"></div>
<div style="left:773px;top:60px;width:1px;height:19px;background:#a8a8a8;"></div>
<div style="left:27px;top:80px;width:860px;height:20px;background:#a9afbd;border-bottom:1px solid #7f93bb;"></div>
<div style="left:27px;top:100px;width:860px;height:20px;background:#c7c7c7;border-bottom:1px solid #7f93bb;"></div>
<div style="left:60px;top:100px;width:1px;height:19px;background:#a8a8a8;"></div>
<div style="left:223px;top:100px;width:1px;height:19px;background:#a8a8a8;"></div>
<div style="left:374px;top:100px;width:1px;height:19px;background:#a8a8a8;"></div>
<div style="left:464px;top:100px;width:1px;height:19px;background:#a8a8a8;"></div>
<div style="left:655px;top:100px;width:1px;height:19px;background:#a8a8a8;"></div>
<div style="left:773px;top:100px;width:1px;height:19px;background:#a8a8a8;"></div>
<div style="left:27px;top:120px;width:860px;height:20px;background:#a9afbd;border-bottom:1px solid #7f93bb;"></div>
<div style="left:27px;top:140px;width:860px;height:20px;background:#c7c7c7;border-bottom:1px solid #7f93bb;"></div>
<div style="left:60px;top:140px;width:1px;height:19px;background:#a8a8a8;"></div>
<div style="left:223px;top:140px;width:1px;height:19px;background:#a8a8a8;"></div>
<div style="left:374px;top:140px;width:1px;height:19px;background:#a8a8a8;"></div>
<div style="left:464px;top:140px;width:1px;height:19px;background:#a8a8a8;"></div>
<div style="left:655px;top:140px;width:1px;height:19px;background:#a8a8a8;"></div>
<div style="left:773px;top:140px;width:1px;height:19px;background:#a8a8a8;"></div>
<div style="left:27px;top:160px;width:860px;height:20px;background:#a9afbd;border-bottom:1px solid #7f93bb;"></div>
<div style="left:27px;top:180px;width:860px;height:20px;background:#c7c7c7;border-bottom:1px solid #7f93bb;"></div>
<div style="left:60px;top:180px;width:1px;height:19px;background:#a8a8a8;"></div>
<div style="left:223px;top:180px;width:1px;height:19px;background:#a8a8a8;"></div>
<div style="left:374px;top:180px;width:1px;height:19px;background:#a8a8a8;"></div>
<div style="left:464px;top:180px;width:1px;height:19px;background:#a8a8a8;"></div>
<div style="left:655px;top:180px;width:1px;height:19px;background:#a8a8a8;"></div>
<div style="left:773px;top:180px;width:1px;height:19px;background:#a8a8a8;"></div>
<div style="left:27px;top:200px;width:860px;height:20px;background:#a9afbd;border-bottom:1px solid #7f93bb;"></div>
<div style="left:27px;top:220px;width:860px;height:20px;background:#c7c7c7;border-bottom:1px solid #7f93bb;"></div>
<div style="left:60px;top:220px;width:1px;height:19px;background:#a8a8a8;"></div>
<div style="left:223px;top:220px;width:1px;height:19px;background:#a8a8a8;"></div>
<div style="left:374px;top:220px;width:1px;height:19px;background:#a8a8a8;"></div>
<div style="left:464px;top:220px;width:1px;height:19px;background:#a8a8a8;"></div>
<div style="left:655px;top:220px;width:1px;height:19px;background:#a8a8a8;"></div>
<div style="left:773px;top:220px;width:1px;height:19px;background:#a8a8a8;"></div>
<div style="left:27px;top:240px;width:860px;height:20px;background:#a9afbd;border-bottom:1px solid #7f93bb;"></div>
<div style="left:27px;top:260px;width:860px;height:20px;background:#c7c7c7;border-bottom:1px solid #7f93bb;"></div>
<div style="left:60px;top:260px;width:1px;height:19px;background:#a8a8a8;"></div>
<div style="left:223px;top:260px;width:1px;height:19px;background:#a8a8a8;"></div>
<div style="left:374px;top:260px;width:1px;height:19px;background:#a8a8a8;"></div>
<div style="left:464px;top:260px;width:1px;height:19px;background:#a8a8a8;"></div>
<div style="left:655px;top:260px;width:1px;height:19px;background:#a8a8a8;"></div>
<div style="left:773px;top:260px;width:1px;height:19px;background:#a8a8a8;"></div>
<div style="left:27px;top:280px;width:860px;height:20px;background:#a9afbd;border-bottom:1px solid #7f93bb;"></div>
<div style="left:27px;top:300px;width:860px;height:20px;background:#c7c7c7;border-bottom:1px solid #7f93bb;"></div>
<div style="left:60px;top:300px;width:1px;height:19px;background:#a8a8a8;"></div>
<div style="left:223px;top:300px;width:1px;height:19px;background:#a8a8a8;"></div>
<div style="left:374px;top:300px;width:1px;height:19px;background:#a8a8a8;"></div>
<div style="left:464px;top:300px;width:1px;height:19px;background:#a8a8a8;"></div>
<div style="left:655px;top:300px;width:1px;height:19px;background:#a8a8a8;"></div>
<div style="left:773px;top:300px;width:1px;height:19px;background:#a8a8a8;"></div>
<div style="left:27px;top:320px;width:860px;height:20px;background:#a9afbd;border-bottom:1px solid #7f93bb;"></div>
<div style="left:27px;top:340px;width:860px;height:20px;background:#c7c7c7;border-bottom:1px solid #7f93bb;"></div>
<div style="left:60px;top:340px;width:1px;height:19px;background:#a8a8a8;"></div>
<div style="left:223px;top:340px;width:1px;height:19px;background:#a8a8a8;"></div>
<div style="left:374px;top:340px;width:1px;height:19px;background:#a8a8a8;"></div>
<div style="left:464px;top:340px;width:1px;height:19px;background:#a8a8a8;"></div>
<div style="left:655px;top:340px;width:1px;height:19px;background:#a8a8a8;"></div>
<div style="left:773px;top:340px;width:1px;height:19px;background:#a8a8a8;"></div>
<div style="left:27px;top:360px;width:860px;height:20px;background:#a9afbd;border-bottom:1px solid #7f93bb;"></div>
<div style="left:27px;top:20px;width:33px;height:19px;background:#4472c4;"></div>
<span class="t" style="left:27.6px;top:23px;font-size:13.4px;color:#fff;transform:scaleX(1.1689);-webkit-text-stroke:0.4px #fff;">id</span>
<div style="left:43px;top:22px;width:16px;height:16px;background:#fff;border:1px solid #d0d0d0;"></div>
<svg style="left:47.5px;top:28.19999999999999px;" width="7" height="3.6" viewBox="0 0 7 3.6"><path d="M0 0H7L3.5 3.6Z" fill="#606060"/></svg>
<span class="t" style="left:63.0px;top:23px;font-size:13.4px;color:#fff;transform:scaleX(1.0420);-webkit-text-stroke:0.4px #fff;">processVariable.name</span>
<div style="left:206px;top:22px;width:16px;height:16px;background:#c7c7c7;border:1px solid #9a9a9a;"></div>
<svg style="left:210.5px;top:28.19999999999999px;" width="7" height="3.6" viewBox="0 0 7 3.6"><path d="M0 0H7L3.5 3.6Z" fill="#606060"/></svg>
<span class="t" style="left:226.0px;top:23px;font-size:13.4px;color:#fff;transform:scaleX(1.0671);-webkit-text-stroke:0.4px #fff;">options.name</span>
<div style="left:357px;top:22px;width:16px;height:16px;background:#c7c7c7;border:1px solid #9a9a9a;"></div>
<svg style="left:361.5px;top:28.19999999999999px;" width="7" height="3.6" viewBox="0 0 7 3.6"><path d="M0 0H7L3.5 3.6Z" fill="#606060"/></svg>
<span class="t" style="left:376.8px;top:23px;font-size:13.4px;color:#fff;transform:scaleX(1.0590);-webkit-text-stroke:0.4px #fff;">uom.name</span>
<div style="left:447px;top:22px;width:16px;height:16px;background:#c7c7c7;border:1px solid #9a9a9a;"></div>
<svg style="left:451.5px;top:28.19999999999999px;" width="7" height="3.6" viewBox="0 0 7 3.6"><path d="M0 0H7L3.5 3.6Z" fill="#606060"/></svg>
<span class="t" style="left:466.5px;top:23px;font-size:13.4px;color:#fff;transform:scaleX(1.0835);-webkit-text-stroke:0.4px #fff;">activityTemplate.name</span>
<div style="left:638px;top:22px;width:16px;height:16px;background:#c7c7c7;border:1px solid #9a9a9a;"></div>
<svg style="left:642.5px;top:28.19999999999999px;" width="7" height="3.6" viewBox="0 0 7 3.6"><path d="M0 0H7L3.5 3.6Z" fill="#606060"/></svg>
<span class="t" style="left:657.7px;top:23px;font-size:13.4px;color:#fff;transform:scaleX(1.0992);-webkit-text-stroke:0.4px #fff;">attribute.name</span>
<div style="left:756px;top:22px;width:16px;height:16px;background:#c7c7c7;border:1px solid #9a9a9a;"></div>
<svg style="left:760.5px;top:28.19999999999999px;" width="7" height="3.6" viewBox="0 0 7 3.6"><path d="M0 0H7L3.5 3.6Z" fill="#606060"/></svg>
<span class="t" style="left:776.0px;top:23px;font-size:13.4px;color:#fff;transform:scaleX(1.0388);-webkit-text-stroke:0.4px #fff;">name</span>
<span class="t" style="left:50.92px;top:43px;font-size:13.4px;color:#000;transform:scaleX(0.9100);">1</span>
<span class="t" style="left:62.3px;top:43px;font-size:13.4px;color:#000;transform:scaleX(0.9532);">CO2</span>
<span class="t" style="left:467px;top:43px;font-size:13.4px;color:#000;transform:scaleX(1.0217);">Pre start check - Filler</span>
<span class="t" style="left:776px;top:43px;font-size:13.4px;color:#000;transform:scaleX(1.0448);">Machine cleanliness</span>
<span class="t" style="left:50.92px;top:63px;font-size:13.4px;color:#000;transform:scaleX(0.9100);">3</span>
<span class="t" style="left:62.3px;top:63px;font-size:13.4px;color:#000;transform:scaleX(0.9955);">DO</span>
<span class="t" style="left:467px;top:63px;font-size:13.4px;color:#000;transform:scaleX(1.0217);">Pre start check - Filler</span>
<span class="t" style="left:776px;top:63px;font-size:13.4px;color:#000;transform:scaleX(0.9568);">DO Check</span>
<span class="t" style="left:50.92px;top:83px;font-size:13.4px;color:#000;transform:scaleX(0.9100);">8</span>
<span class="t" style="left:226px;top:83px;font-size:13.4px;color:#000;transform:scaleX(0.9614);">In Specs</span>
<span class="t" style="left:467px;top:83px;font-size:13.4px;color:#000;transform:scaleX(1.0437);">Approval to Start - Filler</span>
<span class="t" style="left:776px;top:83px;font-size:13.4px;color:#000;transform:scaleX(1.0310);">Commence Production</span>
<span class="t" style="left:50.92px;top:103px;font-size:13.4px;color:#000;transform:scaleX(0.9100);">9</span>
<span class="t" style="left:467px;top:103px;font-size:13.4px;color:#000;transform:scaleX(1.0225);">Pre start check - Palletiser</span>
<span class="t" style="left:776px;top:103px;font-size:13.4px;color:#000;transform:scaleX(1.0258);">Machine Settings</span>
<span class="t" style="left:44.14px;top:123px;font-size:13.4px;color:#000;transform:scaleX(0.9100);">10</span>
<span class="t" style="left:467px;top:123px;font-size:13.4px;color:#000;transform:scaleX(1.0225);">Pre start check - Palletiser</span>
<span class="t" style="left:776px;top:123px;font-size:13.4px;color:#000;transform:scaleX(0.9221);">SSCC Label Check</span>
<span class="t" style="left:44.14px;top:143px;font-size:13.4px;color:#000;transform:scaleX(0.9100);">17</span>
<span class="t" style="left:467px;top:143px;font-size:13.4px;color:#000;transform:scaleX(0.9884);">Label 30 Min QA Check</span>
<span class="t" style="left:776px;top:143px;font-size:13.4px;color:#000;transform:scaleX(0.9823);">Label Check</span>
<span class="t" style="left:44.14px;top:163px;font-size:13.4px;color:#000;transform:scaleX(0.9100);">18</span>
<span class="t" style="left:467px;top:163px;font-size:13.4px;color:#000;transform:scaleX(0.9884);">Label 30 Min QA Check</span>
<span class="t" style="left:776px;top:163px;font-size:13.4px;color:#000;transform:scaleX(0.9784);">Code Check</span>
<span class="t" style="left:44.14px;top:183px;font-size:13.4px;color:#000;transform:scaleX(0.9100);">20</span>
<span class="t" style="left:467px;top:183px;font-size:13.4px;color:#000;transform:scaleX(1.0289);">Sampling Count for Bottle123</span>
<span class="t" style="left:776px;top:183px;font-size:13.4px;color:#000;transform:scaleX(1.0337);">Lift sample and test</span>
<span class="t" style="left:44.14px;top:203px;font-size:13.4px;color:#000;transform:scaleX(0.9100);">25</span>
<span class="t" style="left:226px;top:203px;font-size:13.4px;color:#000;transform:scaleX(0.9614);">In Specs</span>
<span class="t" style="left:467px;top:203px;font-size:13.4px;color:#000;transform:scaleX(1.0443);">Approval to Start - Palletiser</span>
<span class="t" style="left:776px;top:203px;font-size:13.4px;color:#000;transform:scaleX(1.0310);">Commence Production</span>
<span class="t" style="left:44.14px;top:223px;font-size:13.4px;color:#000;transform:scaleX(0.9100);">27</span>
<span class="t" style="left:63px;top:223px;font-size:13.4px;color:#000;transform:scaleX(1.0051);">% Fill</span>
<span class="t" style="left:467px;top:223px;font-size:13.4px;color:#000;transform:scaleX(1.0289);">Sampling Count for Bottle123</span>
<span class="t" style="left:776px;top:223px;font-size:13.4px;color:#000;transform:scaleX(1.0064);">Sample01 Fill</span>
<span class="t" style="left:44.14px;top:243px;font-size:13.4px;color:#000;transform:scaleX(0.9100);">28</span>
<span class="t" style="left:63px;top:243px;font-size:13.4px;color:#000;transform:scaleX(1.0051);">% Fill</span>
<span class="t" style="left:467px;top:243px;font-size:13.4px;color:#000;transform:scaleX(1.0289);">Sampling Count for Bottle123</span>
<span class="t" style="left:776px;top:243px;font-size:13.4px;color:#000;transform:scaleX(1.0064);">Sample02 Fill</span>
<span class="t" style="left:44.14px;top:263px;font-size:13.4px;color:#000;transform:scaleX(0.9100);">29</span>
<span class="t" style="left:63px;top:263px;font-size:13.4px;color:#000;transform:scaleX(1.0051);">% Fill</span>
<span class="t" style="left:467px;top:263px;font-size:13.4px;color:#000;transform:scaleX(1.0289);">Sampling Count for Bottle123</span>
<span class="t" style="left:776px;top:263px;font-size:13.4px;color:#000;transform:scaleX(1.0064);">Sample03 Fill</span>
<span class="t" style="left:44.14px;top:283px;font-size:13.4px;color:#000;transform:scaleX(0.9100);">30</span>
<span class="t" style="left:63px;top:283px;font-size:13.4px;color:#000;transform:scaleX(1.0146);">% Fill Avg</span>
<span class="t" style="left:467px;top:283px;font-size:13.4px;color:#000;transform:scaleX(1.0289);">Sampling Count for Bottle123</span>
<span class="t" style="left:776px;top:283px;font-size:13.4px;color:#000;transform:scaleX(0.9988);">Average Sampling Fill</span>
<span class="t" style="left:44.14px;top:303px;font-size:13.4px;color:#000;transform:scaleX(0.9100);">31</span>
<span class="t" style="left:467px;top:303px;font-size:13.4px;color:#000;transform:scaleX(1.0307);">Start Depal Consumption</span>
<span class="t" style="left:776px;top:303px;font-size:13.4px;color:#000;transform:scaleX(1.0380);">Confirm Bottle Batch</span>
<span class="t" style="left:44.14px;top:323px;font-size:13.4px;color:#000;transform:scaleX(0.9100);">32</span>
<span class="t" style="left:467px;top:323px;font-size:13.4px;color:#000;transform:scaleX(1.0307);">Start Depal Consumption</span>
<span class="t" style="left:776px;top:323px;font-size:13.4px;color:#000;transform:scaleX(1.0414);">Confirm Bottle ID</span>
<span class="t" style="left:44.14px;top:343px;font-size:13.4px;color:#000;transform:scaleX(0.9100);">34</span>
<span class="t" style="left:62.3px;top:343px;font-size:13.4px;color:#000;transform:scaleX(1.0912);">Bottle</span>
<span class="t" style="left:467px;top:343px;font-size:13.4px;color:#000;transform:scaleX(1.0307);">Start Depal Consumption</span>
<span class="t" style="left:776px;top:343px;font-size:13.4px;color:#000;transform:scaleX(1.0322);">Confirm Bottle Code</span>
<span class="t" style="left:44.14px;top:363px;font-size:13.4px;color:#000;transform:scaleX(0.9100);">38</span>
<span class="t" style="left:226px;top:363px;font-size:13.4px;color:#000;transform:scaleX(1.0150);">Stoppage classification</span>
<span class="t" style="left:467px;top:363px;font-size:13.4px;color:#000;transform:scaleX(1.0161);">Enter stoppage reason</span>
<span class="t" style="left:776px;top:363px;font-size:13.4px;color:#000;transform:scaleX(1.0234);">Enter stoppage details</span>
<div style="left:24px;top:18px;width:860px;height:2px;background:#217346;"></div>
<div style="left:24px;top:18px;width:2px;height:360px;background:#217346;"></div>
<div style="left:26px;top:20px;width:860px;height:1px;background:#e8e8e8;"></div>
<div style="left:26px;top:20px;width:1px;height:360px;background:#e8e8e8;"></div>
</div>
<div style="left:879px;top:210px;width:15px;height:15px;background:#fff;border:1px solid #777;"></div>
<svg style="left:883.2px;top:215.6px;" width="6.6" height="3.8" viewBox="0 0 6.6 3.8"><path d="M0 3.8L3.3 0L6.6 3.8Z" fill="#777"/></svg>
<div style="left:879px;top:224px;width:15px;height:75px;background:#fff;border:1px solid #777;"></div>
<div style="left:879px;top:563px;width:15px;height:15px;background:#fff;border:1px solid #777;"></div>
<svg style="left:883.2px;top:568.6px;" width="6.6" height="3.8" viewBox="0 0 6.6 3.8"><path d="M0 0H6.6L3.3 3.8Z" fill="#777"/></svg>
<div style="left:1px;top:577px;width:876px;height:28px;background:#e6e6e6;"></div>
<div style="left:101px;top:577px;width:157px;height:25px;background:#fff;border-bottom:2px solid #217346;border-right:1px solid #c6c6c6;"></div>
<span class="t" style="left:113.3px;top:582.5px;font-size:13px;font-weight:700;color:#217346;transform:scaleX(1.0185);">ActivityTemplateItem</span>
<svg style="left:28px;top:587px;" width="5" height="7" viewBox="0 0 5 7"><path d="M5 0V7L0 3.5Z" fill="#c0c0c0"/></svg>
<svg style="left:57px;top:587px;" width="5" height="7" viewBox="0 0 5 7"><path d="M0 0V7L5 3.5Z" fill="#c0c0c0"/></svg>
<svg style="left:290.5px;top:582.5px;" width="17" height="17" viewBox="0 0 17 17"><circle cx="8.5" cy="8.5" r="7.5" fill="none" stroke="#777" stroke-width="1.2"/><path d="M8.5 4.5V12.5M4.5 8.5H12.5" stroke="#777" stroke-width="1.4"/></svg>
<div style="left:570px;top:584px;width:292px;height:15px;background:#d9d9d9;"></div>
<div style="left:555px;top:584px;width:15px;height:15px;background:#fff;border:1px solid #777;"></div>
<svg style="left:560.5px;top:588.2px;" width="4" height="6.6" viewBox="0 0 4 6.6"><path d="M4 0V6.6L0 3.3Z" fill="#777"/></svg>
<div style="left:569px;top:584px;width:45px;height:15px;background:#fff;border:1px solid #777;"></div>
<div style="left:861px;top:584px;width:15px;height:15px;background:#fff;border:1px solid #777;"></div>
<svg style="left:866.5px;top:588.2px;" width="4" height="6.6" viewBox="0 0 4 6.6"><path d="M0 0V6.6L4 3.3Z" fill="#777"/></svg>
<div style="left:538px;top:586.5px;width:2px;height:2px;background:#a0a0a0;"></div>
<div style="left:538px;top:590.5px;width:2px;height:2px;background:#a0a0a0;"></div>
<div style="left:538px;top:594.5px;width:2px;height:2px;background:#a0a0a0;"></div>
<div style="left:897px;top:208px;width:1px;height:397px;background:#d2d2d2;"></div>
<span class="t" style="left:911px;top:222.8px;font-size:21px;color:#217346;transform:scaleX(0.9737);-webkit-text-stroke:0.4px #e6e6e6;">TilliT DO - Stage</span>
<svg style="left:1177px;top:229px;" width="9" height="5" viewBox="0 0 9 5"><path d="M0 0H9L4.5 5Z" fill="#707070"/></svg>
<svg style="left:1218px;top:226px;" width="10" height="10" viewBox="0 0 10 10"><path d="M0.7 0.7L9.3 9.3M9.3 0.7L0.7 9.3" stroke="#666" stroke-width="2"/></svg>
<div style="left:911px;top:255px;width:322px;height:336px;background:#fff;border:1px solid #d0d0d0;overflow:hidden;"><div style="left:144px;top:284px;width:40px;height:40px;background:#3949d4;border-radius:50%;box-shadow:0 3px 5px -1px rgba(0,0,0,.2),0 6px 10px 0 rgba(0,0,0,.14),0 1px 18px 0 rgba(0,0,0,.12);"></div></div>
<div style="left:912px;top:304px;width:320px;height:1px;background:#e0e0e0;"></div>
<div style="left:912px;top:419px;width:3px;height:1px;background:#dcdcdc;"></div>
<div style="left:1229px;top:419px;width:3px;height:1px;background:#dcdcdc;"></div>
<div style="left:912px;top:302px;width:136px;height:2px;background:#3b49d4;"></div>
<span class="t" style="left:936.6px;top:273.5px;font-size:13.6px;color:#707070;transform:scaleX(1.0144);-webkit-text-stroke:0.45px #707070;">Data Manager</span>
<span class="t" style="left:928px;top:321.3px;font-size:14px;font-weight:700;color:#212121;transform:scaleX(0.9501);">Activity Template Item</span>
<span class="t" style="left:960px;top:384px;font-size:14.5px;color:#3b49d4;transform:scaleX(0.9013);-webkit-text-stroke:0.3px #3b49d4;">Save</span>
<span class="t" style="left:1042.2px;top:384px;font-size:14.5px;color:#212121;transform:scaleX(0.9334);">Refresh</span>
<svg style="left:1076.3px;top:272px;" width="16" height="16" viewBox="0 0 24 24"><path d="M19.14 12.94c.04-.3.06-.61.06-.94 0-.32-.02-.64-.07-.94l2.03-1.58c.18-.14.23-.41.12-.61l-1.92-3.32c-.12-.22-.37-.29-.59-.22l-2.39.96c-.5-.38-1.03-.7-1.62-.94l-.36-2.54c-.04-.24-.24-.41-.48-.41h-3.84c-.24 0-.43.17-.47.41l-.36 2.54c-.59.24-1.13.57-1.62.94l-2.39-.96c-.22-.08-.47 0-.59.22L2.74 8.87c-.12.21-.08.47.12.61l2.03 1.58c-.05.3-.09.63-.09.94s.02.64.07.94l-2.03 1.58c-.18.14-.23.41-.12.61l1.92 3.32c.12.22.37.29.59.22l2.39-.96c.5.38 1.03.7 1.62.94l.36 2.54c.05.24.24.41.48.41h3.84c.24 0 .44-.17.47-.41l.36-2.54c.59-.24 1.13-.56 1.62-.94l2.39.96c.22.08.47 0 .59-.22l1.92-3.32c.12-.22.07-.47-.12-.61l-2.01-1.58zM12 15.6c-1.98 0-3.6-1.62-3.6-3.6s1.62-3.6 3.6-3.6 3.6 1.62 3.6 3.6-1.62 3.6-3.6 3.6z" fill="#666"/></svg>
<svg style="left:942px;top:385.2px;" width="16" height="16" viewBox="0 0 24 24"><path d="M17 3H5c-1.11 0-2 .9-2 2v14c0 1.1.89 2 2 2h14c1.1 0 2-.9 2-2V7l-4-4zm-5 16c-1.66 0-3-1.34-3-3s1.34-3 3-3 3 1.34 3 3-1.34 3-3 3zm3-10H5V5h10v4z" fill="#3b49d4"/></svg>
<svg style="left:1125.3px;top:383.8px;" width="18" height="18" viewBox="0 0 24 24"><path d="M6 19c0 1.1.9 2 2 2h8c1.1 0 2-.9 2-2V7H6v12zM19 4h-3.5l-1-1h-5l-1 1H5v2h14V4z" fill="#f44336"/></svg>
<svg style="left:1069px;top:552.7px;" width="14" height="14" viewBox="0 0 14 14"><path d="M7 0.5V13.5M0.5 7H13.5" stroke="#fff" stroke-width="2.9"/></svg>
<div style="left:1px;top:605px;width:1246px;height:22px;background:#f3f2f1;border-top:1px solid #f9f9f9;"></div>
<div style="left:936px;top:606px;width:40px;height:21px;background:#c8c6c4;"></div>
<span class="t" style="left:8.8px;top:609.6px;font-size:12px;color:#555;transform:scaleX(0.8649);">Ready</span>
<span class="t" style="left:109.3px;top:609.6px;font-size:12px;color:#555;transform:scaleX(0.9380);">Accessibility: Investigate</span>
<span class="t" style="left:662.4px;top:609.6px;font-size:12px;color:#555;transform:scaleX(0.8992);">Average: 190.0898204</span>
<span class="t" style="left:788.9px;top:609.6px;font-size:12px;color:#555;transform:scaleX(0.9265);">Count: 931</span>
<span class="t" style="left:860.5px;top:609.6px;font-size:12px;color:#555;transform:scaleX(0.8885);">Sum: 31745</span>
<span class="t" style="left:1202px;top:609.6px;font-size:12px;color:#555;transform:scaleX(0.8370);">100%</span>
<svg style="left:0px;top:604px;" width="240" height="24" viewBox="0 604 240 24"><g fill="none" stroke="#555" stroke-width="1.1"><rect x="59.6" y="610.6" width="13" height="11.2"/><path d="M59.6 613H72.6M61.6 615.4H65M61.6 617.6H64M61.6 619.8H64"/><circle cx="68.4" cy="618.4" r="3.6" fill="#f3f2f1"/><circle cx="68.4" cy="618.4" r="1.5" fill="#555"/></g><g fill="none" stroke="#555" stroke-width="1.1"><circle cx="97" cy="611.4" r="1.7"/><path d="M91.4 614.2C94 615 100 615 102.8 614.2M95.4 615V618L93.2 622.6M98.6 615V618L99.6 620"/><path d="M99.8 617.4L104.6 622.4M104.6 617.4L99.8 622.4"/></g></svg>
<svg style="left:940px;top:604px;" width="110" height="24" viewBox="940 604 110 24"><g fill="none" stroke="#555" stroke-width="1"><rect x="949.5" y="609.5" width="12" height="12"/><path d="M949.5 613.5H961.5M949.5 617.5H961.5M953.5 609.5V621.5M957.5 609.5V621.5"/><rect x="989.5" y="609.5" width="13" height="12"/><rect x="992.5" y="612.5" width="7" height="6.5"/><path d="M994 614.5H998M994 616.5H998"/><path d="M1029.5 609.5H1042.5V621.5H1029.5Z"/><path d="M1033.5 609.5V615.5H1042.5M1038.5 609.5V615.5"/></g></svg>
<div style="left:1075px;top:616px;width:100px;height:1px;background:#666;"></div>
<div style="left:1123px;top:611px;width:5px;height:11px;background:#666;"></div>
<div style="left:1062.5px;top:616px;width:7px;height:1px;background:#555;"></div>
<div style="left:1180px;top:616px;width:7px;height:1px;background:#555;"></div>
<div style="left:1183px;top:613px;width:1px;height:7px;background:#555;"></div>
<div style="left:0px;top:35px;width:1px;height:593px;background:#217346;"></div>
<div style="left:1247px;top:35px;width:1px;height:593px;background:#217346;"></div>
<div style="left:0px;top:627px;width:1248px;height:1px;background:#217346;"></div>
</body></html>
